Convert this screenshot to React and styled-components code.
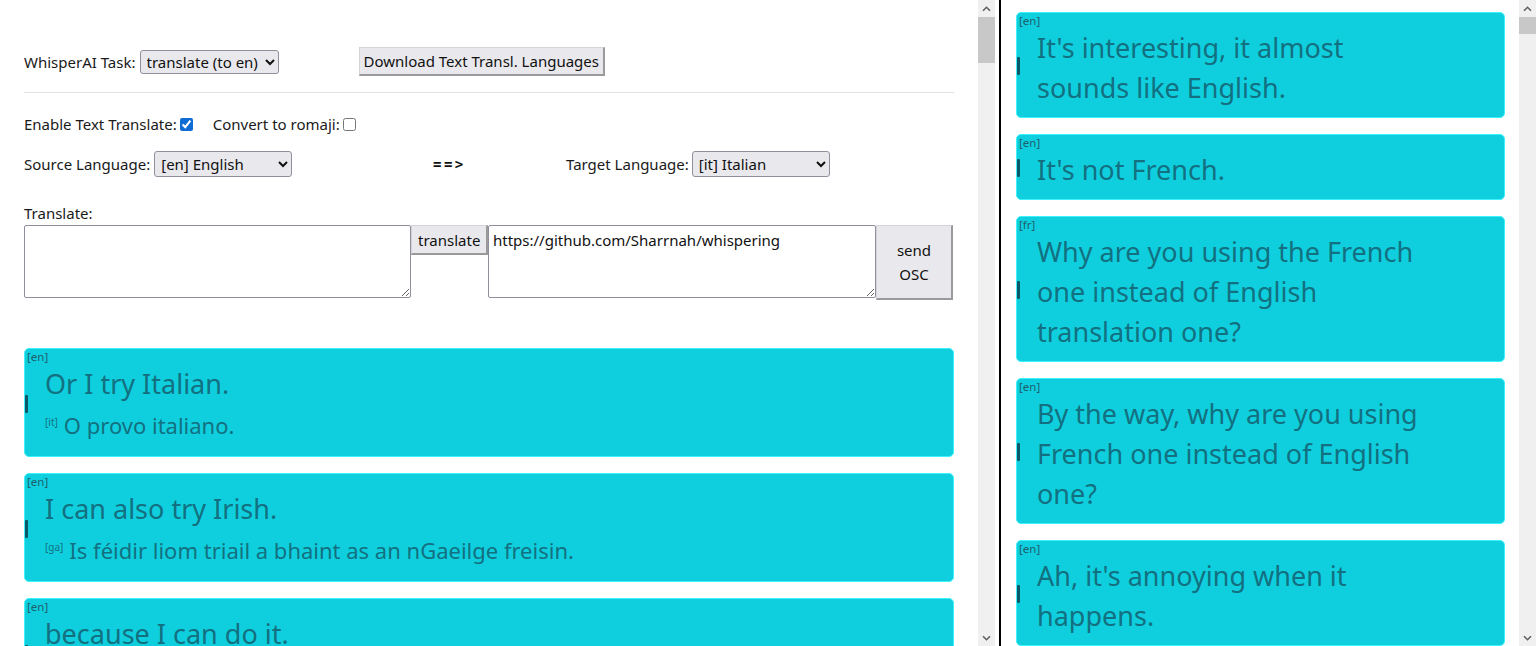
import React from "react";
import styled, { createGlobalStyle } from "styled-components";

const Global = createGlobalStyle`
  html, body { margin: 0; padding: 0; height: 100%; overflow: hidden; background: #fff; }
  body { font-family: "Noto Sans", "Open Sans", sans-serif; font-size: 15px; color: #1a1a1a; }
  #root { height: 100%; }
  * { box-sizing: border-box; }
`;

const Shell = styled.div`
  display: flex;
  height: 646px;
  width: 1536px;
`;

const Pane = styled.div`
  display: flex;
  height: 100%;
  overflow: hidden;
  flex: ${(p) => (p.$grow ? "1 1 auto" : "0 0 auto")};
  width: ${(p) => (p.$width ? `${p.$width}px` : "auto")};
  border-left: ${(p) => (p.$divider ? "2px solid #000" : "none")};
  margin-left: ${(p) => (p.$divider ? "4px" : "0")};
`;

const Scroller = styled.div`
  flex: 1 1 auto;
  min-width: 0;
  overflow: hidden;
  padding: ${(p) => p.$pad};
`;

const Bar = styled.div`
  flex: 0 0 17px;
  display: flex;
  flex-direction: column;
  background: #f0f0f0;
`;

const BarBtn = styled.div`
  flex: 0 0 17px;
  display: flex;
  align-items: center;
  justify-content: center;
`;

const Track = styled.div`
  flex: 1 1 auto;
`;

const Thumb = styled.div`
  background: #c8c8c8;
  height: ${(p) => p.$h}px;
`;

const Chevron = ({ down }) => (
  <svg width="9" height="6" viewBox="0 0 9 6">
    <path
      d={down ? "M1 1.2 L4.5 4.7 L8 1.2" : "M1 4.8 L4.5 1.3 L8 4.8"}
      fill="none"
      stroke="#606060"
      strokeWidth="1.6"
    />
  </svg>
);

const ScrollBar = ({ thumb }) => (
  <Bar>
    <BarBtn>
      <Chevron />
    </BarBtn>
    <Track>
      <Thumb $h={thumb} />
    </Track>
    <BarBtn>
      <Chevron down />
    </BarBtn>
  </Bar>
);

const Row = styled.div`
  display: flex;
  align-items: center;
  height: ${(p) => p.$h}px;
  margin-top: ${(p) => p.$mt || 0}px;
`;

const Label = styled.span`
  margin-right: ${(p) => p.$mr ?? 4}px;
  white-space: nowrap;
`;

const Select = styled.select`
  font: inherit;
  font-size: 15px;
  width: ${(p) => p.$w}px;
  height: ${(p) => p.$h}px;
  color: #111;
  background: #e9e9ed;
  border: 1px solid #8f8f9d;
  border-radius: 3px;
  padding: 0 2px;
`;

const Button = styled.button`
  font: inherit;
  font-size: 15px;
  color: #111;
  background: #e9e9ed;
  border-style: solid;
  border-width: 1px 2px 2px 1px;
  border-color: #d4d4d8 #9a9a9a #9a9a9a #d4d4d8;
  border-radius: 0;
  padding: 0 ${(p) => p.$px ?? 6}px;
  height: ${(p) => p.$h}px;
  width: ${(p) => (p.$w ? `${p.$w}px` : "auto")};
  margin-left: ${(p) => p.$ml || 0}px;
  line-height: ${(p) => p.$lh || "normal"};
  flex: 0 0 auto;
`;

const Rule = styled.hr`
  border: none;
  border-top: 1px solid #e3e3e3;
  margin: 16px 0 0 0;
`;

const Check = styled.input`
  margin: 0 ${(p) => p.$mr}px 0 3px;
  width: 13px;
  height: 13px;
  accent-color: #0f6cd4;
`;

const LangGrid = styled.div`
  display: grid;
  grid-template-columns: 409px 133px auto;
  align-items: center;
  height: 26px;
  margin-top: 17px;
`;

const Cell = styled.div`
  display: flex;
  align-items: center;
`;

const Arrow = styled.span`
  font-family: "DejaVu Sans Mono", "Liberation Mono", monospace;
  font-weight: bold;
  font-size: 14px;
  letter-spacing: 2.5px;
  color: #111;
`;

const BlockLabel = styled.div`
  margin-top: 26px;
  line-height: 20px;
`;

const TranslateRow = styled.div`
  display: flex;
  align-items: flex-start;
  margin-top: 2px;
`;

const Area = styled.textarea`
  font: inherit;
  font-size: 15px;
  width: ${(p) => p.$w}px;
  height: 73px;
  border: 1px solid #8f8f9d;
  border-radius: 2px;
  padding: 4px;
  color: #111;
  flex: 0 0 auto;
`;

const CardList = styled.div`
  display: flex;
  flex-direction: column;
  gap: 16px;
  margin-top: ${(p) => p.$mt}px;
`;

const Card = styled.div`
  background: #0fcfdf;
  border: 1px solid #3cf2fc;
  border-radius: 5px;
  color: #137080;
  padding: 0 ${(p) => p.$pr}px 9px 0;
`;

const Tag = styled.div`
  font-size: 11.5px;
  line-height: 15px;
  padding-left: 2px;
  color: #1d5f6d;
`;

const Body = styled.div`
  display: flex;
  align-items: center;
`;

const Marker = styled.span`
  flex: 0 0 3px;
  height: 18px;
  background: #0b5866;
  border-radius: 1px;
  margin-top: -4px;
`;

const Content = styled.div`
  margin-left: 17px;
  min-width: 0;
`;

const Main = styled.div`
  font-size: 27px;
  line-height: 40px;
`;

const Trans = styled.div`
  font-size: 22px;
  line-height: 30px;
  margin: 6px 0 7px 0;
`;

const SmallTag = styled.span`
  display: inline-block;
  font-size: 10px;
  vertical-align: top;
  line-height: 12px;
  margin: 6px 6px 0 0;
`;

const leftCards = [
  ["en", "Or I try Italian.", "it", "O provo italiano."],
  ["en", "I can also try Irish.", "ga", "Is féidir liom triail a bhaint as an nGaeilge freisin."],
  ["en", "because I can do it.", "ga", "mar is féidir liom é a dhéanamh."],
];

const rightCards = [
  ["en", "It's interesting, it almost sounds like English."],
  ["en", "It's not French."],
  ["fr", "Why are you using the French one instead of English translation one?"],
  ["en", "By the way, why are you using French one instead of English one?"],
  ["en", "Ah, it's annoying when it happens."],
];

export default function App() {
  return (
    <>
      <Global />
      <Shell>
        <Pane $width={995}>
          <Scroller $pad="47px 24px 0 24px">
            <Row $h={29}>
              <Label>WhisperAI Task:</Label>
              <Select $w={139} $h={24} defaultValue="translate">
                <option value="translate">translate (to en)</option>
                <option value="transcribe">transcribe</option>
              </Select>
              <Button $h={29} $ml={80} $px={4}>Download Text Transl. Languages</Button>
            </Row>
            <Rule />
            <Row $h={20} $mt={21}>
              <Label $mr={0}>Enable Text Translate:</Label>
              <Check type="checkbox" defaultChecked $mr={20} />
              <Label $mr={0}>Convert to romaji:</Label>
              <Check type="checkbox" $mr={0} />
            </Row>
            <LangGrid>
              <Cell>
                <Label>Source Language:</Label>
                <Select $w={138} $h={26} defaultValue="en">
                  <option value="en">[en] English</option>
                </Select>
              </Cell>
              <Cell>
                <Arrow>==&gt;</Arrow>
              </Cell>
              <Cell>
                <Label $mr={3}>Target Language:</Label>
                <Select $w={138} $h={26} defaultValue="it">
                  <option value="it">[it] Italian</option>
                </Select>
              </Cell>
            </LangGrid>
            <BlockLabel>Translate:</BlockLabel>
            <TranslateRow>
              <Area $w={387} defaultValue="" />
              <Button $h={30} $w={77}>translate</Button>
              <Area $w={388} defaultValue="https://github.com/Sharrnah/whispering" />
              <Button $h={75} $w={77} $lh="24px">send<br />OSC</Button>
            </TranslateRow>
            <CardList $mt={48}>
              {leftCards.map(([l, t, tl, tt], i) => (
                <Card key={i} $pr={8}>
                  <Tag>[{l}]</Tag>
                  <Body>
                    <Marker />
                    <Content>
                      <Main>{t}</Main>
                      <Trans>
                        <SmallTag>[{tl}]</SmallTag>
                        {tt}
                      </Trans>
                    </Content>
                  </Body>
                </Card>
              ))}
            </CardList>
          </Scroller>
          <ScrollBar thumb={46} />
        </Pane>
        <Pane $grow $divider>
          <Scroller $pad="12px 14px 0 15px">
            <CardList $mt={0}>
              {rightCards.map(([l, t], i) => (
                <Card key={i} $pr={68}>
                  <Tag>[{l}]</Tag>
                  <Body>
                    <Marker />
                    <Content>
                      <Main>{t}</Main>
                    </Content>
                  </Body>
                </Card>
              ))}
            </CardList>
          </Scroller>
          <ScrollBar thumb={17} />
        </Pane>
      </Shell>
    </>
  );
}
